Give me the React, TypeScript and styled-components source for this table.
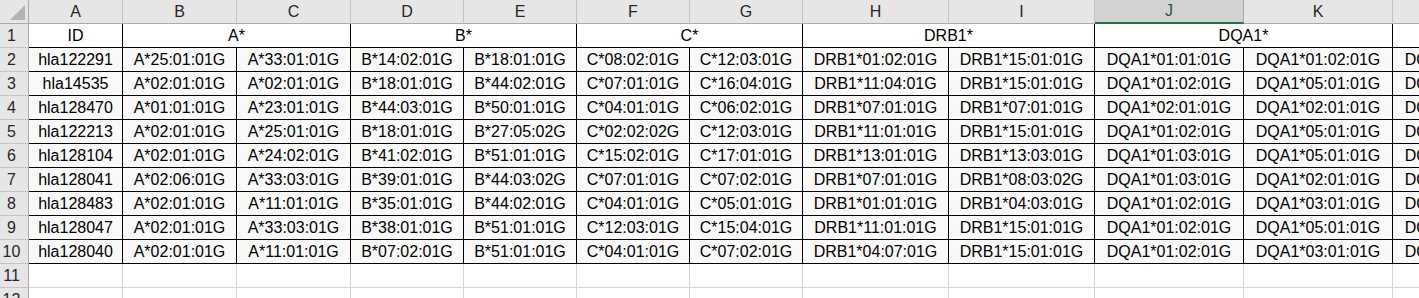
import React from "react";
import styled, { createGlobalStyle, css } from "styled-components";

const GlobalStyle = createGlobalStyle`
  html, body {
    margin: 0;
    padding: 0;
    background: #ffffff;
    overflow: hidden;
  }
  body {
    font-family: "Liberation Sans", Arial, sans-serif;
  }
`;

// column widths include the 1px right border of each cell
const COL_WIDTHS = [29, 94, 114, 114, 113, 113, 113, 113, 146, 146, 149, 149, 149, 149];
const LETTERS = ["A", "B", "C", "D", "E", "F", "G", "H", "I", "J", "K", "L", "M"];
const SELECTED = "J";

const Sheet = styled.div`
  display: grid;
  grid-template-columns: ${COL_WIDTHS.map((w) => `${w}px`).join(" ")};
  grid-auto-rows: 24px;
  width: max-content;
  font-size: 16px;
  color: #000;
`;

const Corner = styled.div`
  box-sizing: border-box;
  background: #e6e6e6;
  border-right: 1px solid #ababab;
  border-bottom: 1px solid #ababab;
  display: flex;
  align-items: flex-end;
  justify-content: flex-end;
  padding: 0 3px 3px 0;
`;

const ColHeader = styled.div<{ $selected?: boolean }>`
  box-sizing: border-box;
  background: #e6e6e6;
  border-right: 1px solid #c4c4c4;
  border-bottom: 1px solid #ababab;
  color: #262626;
  display: flex;
  align-items: center;
  justify-content: center;
  ${(p) =>
    p.$selected &&
    css`
      background: #d2d2d2;
      color: #185c37;
      border-right-color: #ababab;
      border-bottom: 2px solid #217346;
    `}
`;

const RowHeader = styled.div`
  box-sizing: border-box;
  background: #e6e6e6;
  border-right: 1px solid #ababab;
  border-bottom: 1px solid #c4c4c4;
  color: #262626;
  display: flex;
  align-items: center;
  justify-content: center;
  padding-right: 5px;
`;

const Cell = styled.div<{ $span?: number; $tone: "title" | "data" | "empty" }>`
  box-sizing: border-box;
  grid-column: span ${(p) => p.$span ?? 1};
  display: flex;
  align-items: center;
  justify-content: center;
  white-space: nowrap;
  overflow: hidden;
  border-right: 1px solid #000;
  border-bottom: 1px solid #000;
  background: ${(p) => (p.$tone === "data" ? "#f9f9f9" : "#ffffff")};
  ${(p) =>
    p.$tone === "empty" &&
    css`
      border-right-color: #d4d4d4;
      border-bottom-color: #d4d4d4;
    `}
`;

const groups: { label: string; span: number }[] = [
  { label: "ID", span: 1 },
  { label: "A*", span: 2 },
  { label: "B*", span: 2 },
  { label: "C*", span: 2 },
  { label: "DRB1*", span: 2 },
  { label: "DQA1*", span: 2 },
  { label: "DQB1*", span: 2 },
];

const rows: string[][] = [
  ["hla122291", "A*25:01:01G", "A*33:01:01G", "B*14:02:01G", "B*18:01:01G", "C*08:02:01G", "C*12:03:01G", "DRB1*01:02:01G", "DRB1*15:01:01G", "DQA1*01:01:01G", "DQA1*01:02:01G", "DQB1*05:01:01G", "DQB1*06:02:01G"],
  ["hla14535", "A*02:01:01G", "A*02:01:01G", "B*18:01:01G", "B*44:02:01G", "C*07:01:01G", "C*16:04:01G", "DRB1*11:04:01G", "DRB1*15:01:01G", "DQA1*01:02:01G", "DQA1*05:01:01G", "DQB1*03:01:01G", "DQB1*06:02:01G"],
  ["hla128470", "A*01:01:01G", "A*23:01:01G", "B*44:03:01G", "B*50:01:01G", "C*04:01:01G", "C*06:02:01G", "DRB1*07:01:01G", "DRB1*07:01:01G", "DQA1*02:01:01G", "DQA1*02:01:01G", "DQB1*02:02:01G", "DQB1*02:02:01G"],
  ["hla122213", "A*02:01:01G", "A*25:01:01G", "B*18:01:01G", "B*27:05:02G", "C*02:02:02G", "C*12:03:01G", "DRB1*11:01:01G", "DRB1*15:01:01G", "DQA1*01:02:01G", "DQA1*05:01:01G", "DQB1*03:01:01G", "DQB1*06:02:01G"],
  ["hla128104", "A*02:01:01G", "A*24:02:01G", "B*41:02:01G", "B*51:01:01G", "C*15:02:01G", "C*17:01:01G", "DRB1*13:01:01G", "DRB1*13:03:01G", "DQA1*01:03:01G", "DQA1*05:01:01G", "DQB1*03:01:01G", "DQB1*06:03:01G"],
  ["hla128041", "A*02:06:01G", "A*33:03:01G", "B*39:01:01G", "B*44:03:02G", "C*07:01:01G", "C*07:02:01G", "DRB1*07:01:01G", "DRB1*08:03:02G", "DQA1*01:03:01G", "DQA1*02:01:01G", "DQB1*02:02:01G", "DQB1*06:01:01G"],
  ["hla128483", "A*02:01:01G", "A*11:01:01G", "B*35:01:01G", "B*44:02:01G", "C*04:01:01G", "C*05:01:01G", "DRB1*01:01:01G", "DRB1*04:03:01G", "DQA1*01:02:01G", "DQA1*03:01:01G", "DQB1*03:02:01G", "DQB1*05:01:01G"],
  ["hla128047", "A*02:01:01G", "A*33:03:01G", "B*38:01:01G", "B*51:01:01G", "C*12:03:01G", "C*15:04:01G", "DRB1*11:01:01G", "DRB1*15:01:01G", "DQA1*01:02:01G", "DQA1*05:01:01G", "DQB1*03:01:01G", "DQB1*06:02:01G"],
  ["hla128040", "A*02:01:01G", "A*11:01:01G", "B*07:02:01G", "B*51:01:01G", "C*04:01:01G", "C*07:02:01G", "DRB1*04:07:01G", "DRB1*15:01:01G", "DQA1*01:02:01G", "DQA1*03:01:01G", "DQB1*03:01:01G", "DQB1*06:02:01G"],
];

const SelectAllMark = () => (
  <svg width="16" height="15" viewBox="0 0 16 15">
    <polygon points="16,0 16,15 1,15" fill="#b4b4b4" />
  </svg>
);

export default function App() {
  return (
    <>
      <GlobalStyle />
      <Sheet>
        <Corner>
          <SelectAllMark />
        </Corner>
        {LETTERS.map((l) => (
          <ColHeader key={l} $selected={l === SELECTED}>
            {l}
          </ColHeader>
        ))}

        <RowHeader>1</RowHeader>
        {groups.map((g) => (
          <Cell key={g.label} $span={g.span} $tone="title">
            {g.label}
          </Cell>
        ))}

        {rows.map((row, i) => (
          <React.Fragment key={row[0]}>
            <RowHeader>{i + 2}</RowHeader>
            {row.map((v, j) => (
              <Cell key={j} $tone="data">
                {v}
              </Cell>
            ))}
          </React.Fragment>
        ))}

        {[11, 12].map((n) => (
          <React.Fragment key={n}>
            <RowHeader>{n}</RowHeader>
            {LETTERS.map((l) => (
              <Cell key={l} $tone="empty" />
            ))}
          </React.Fragment>
        ))}
      </Sheet>
    </>
  );
}
